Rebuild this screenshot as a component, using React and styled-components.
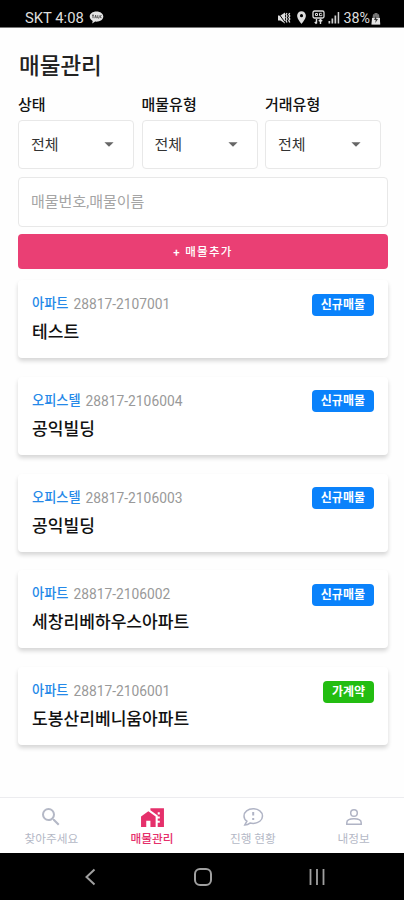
import React from "react";
import styled, {createGlobalStyle} from "styled-components";
import {MdArrowDropDown, MdHomeWork, MdLocationOn, MdSearch} from "react-icons/md";

const GlobalStyle = createGlobalStyle`
  * {
    box-sizing: border-box;
  }
  body {
    margin: 0;
    background: #fff;
    font-family: Roboto, "Noto Sans CJK KR", sans-serif;
  }
`;

const Screen = styled.div`
  width: 100%;
  height: 900px;
  display: flex;
  flex-direction: column;
  background: #fefefe;
  overflow: hidden;
`;

const StatusBar = styled.header`
  height: 28px;
  padding: 7px 23px 0 25px;
  display: flex;
  justify-content: space-between;
  background: #000;
  border-bottom: 1px solid #777;
  color: #dedede;
  font-size: 14px;
  line-height: 21px;
`;

const StatusGroup = styled.div`
  height: 21px;
  display: flex;
  align-items: center;
  gap: ${({gap}) => gap}px;
`;

const Carrier = styled.span`
  font-size: 14.8px;
  padding-top: 1px;
`;

const Battery = styled.div`
  display: flex;
  align-items: center;
  gap: 1px;
  padding-top: 1px;
  font-size: 14.3px;
`;

const Main = styled.main`
  flex: 1;
  padding: 21px 16px 0 18px;
`;

const Title = styled.h1`
  margin: 0;
  padding-left: 1px;
  font-size: 22.5px;
  font-weight: 500;
  line-height: 34px;
  color: #222;
`;

const Filters = styled.div`
  margin-top: 12px;
  display: grid;
  grid-template-columns: repeat(3, 116px);
  column-gap: 7.5px;
`;

const Label = styled.div`
  height: 25px;
  font-size: 15px;
  font-weight: 500;
  line-height: 20px;
  color: #111;
`;

const Select = styled.button`
  width: 116px;
  height: 49px;
  padding: 0 13px 2px 12px;
  display: flex;
  align-items: center;
  justify-content: space-between;
  border: 1px solid #e8e8e8;
  border-radius: 4px;
  background: #fff;
  font-family: inherit;
  font-size: 15px;
  color: #333;

  svg {
    color: #666;
  }
`;

const SearchInput = styled.input`
  display: block;
  width: 370px;
  height: 50px;
  margin-top: 8px;
  padding: 0 12px;
  border: 1px solid #e8e8e8;
  border-radius: 4px;
  background: #fff;
  font-family: inherit;
  font-size: 15px;

  &::placeholder {
    color: #a5a5a5;
    opacity: 1;
  }
`;

const AddButton = styled.button`
  display: block;
  width: 370px;
  height: 35px;
  margin-top: 7px;
  padding: 0 0 2px;
  border: 0;
  border-radius: 4px;
  background: #ea3f74;
  color: #fff;
  font-family: inherit;
  font-size: 11.5px;
  font-weight: 500;
  letter-spacing: 1.3px;
`;

const List = styled.div`
  width: 370px;
  margin-top: 11px;
  display: flex;
  flex-direction: column;
  gap: 18.75px;
`;

const Card = styled.article`
  height: 78px;
  padding: 14px 14px 0;
  display: flex;
  justify-content: space-between;
  align-items: flex-start;
  border-radius: 4px;
  background: #fff;
  box-shadow: 0 3px 4px rgba(0, 0, 0, 0.16);
`;

const Meta = styled.div`
  display: flex;
  gap: 5px;
  font-size: 13.8px;
  line-height: 20px;
  color: #999;
`;

const Kind = styled.span`
  color: #2589e8;
  font-size: 13.2px;
  font-weight: 500;
`;

const Name = styled.div`
  margin-top: 5px;
  font-size: 17.1px;
  font-weight: 500;
  line-height: 26px;
  color: #111;
`;

const Badge = styled.span`
  height: 22px;
  margin-top: -0.5px;
  padding: 0 9px;
  border-radius: 4px;
  background: ${({color}) => color};
  color: #fff;
  font-size: 12px;
  font-weight: 700;
  line-height: 22px;
`;

const TabBar = styled.nav`
  height: 56px;
  padding-left: 1px;
  display: grid;
  grid-template-columns: repeat(4, 1fr);
  border-top: 1px solid #ececef;
  background: #fff;
`;

const Tab = styled.div`
  padding-top: 7px;
  display: flex;
  flex-direction: column;
  align-items: center;
  gap: 1.5px;
  font-size: 11.7px;
  font-weight: ${({$active}) => ($active ? 500 : 400)};
  line-height: 17px;
  color: ${({$active}) => ($active ? "#e5306b" : "#b4b8c6")};
`;

const TabIcon = styled.span`
  height: 24px;
  display: flex;
  align-items: center;
`;

const SystemBar = styled.footer`
  height: 47px;
  padding: 0 78px 0 82px;
  display: flex;
  align-items: center;
  justify-content: space-between;
  background: #000;
`;

const TalkIcon = () => (
  <svg width="15" height="13" viewBox="0 0 15 13">
    <path d="M7.5 0.5C3.6 0.5 0.7 2.7 0.7 5.6c0 1.9 1.2 3.4 3 4.3L3.2 12.5l3-1.9c4.6.4 8.1-1.8 8.1-5C14.3 2.7 11.4.5 7.5.5z" fill="#e4e4e4"/>
    <path d="M3 4.2h2M4 4.2v3M5.8 7.2l.8-3 .8 3M8.8 4.2V7H10M11 4.2v3M12.4 4.2l-1.2 1.4 1.2 1.5" stroke="#444" strokeWidth="0.9" fill="none"/>
  </svg>
);

const MuteIcon = () => (
  <svg width="14" height="14" viewBox="0 0 14 14" fill="none" stroke="#dedede">
    <path d="M1 4.5h2.500L8 1.500v11L3.500 9.500H1z" fill="#dedede" stroke="none"/>
    <path d="M0.500 1l8 11" stroke="#000" strokeWidth="1"/>
    <path d="M10 2L9 3.500 10 5 9 6.500 10 8 9 9.500l1 2M12.800 2l-1 1.500 1 1.500-1 1.500 1 1.500-1 1.500 1 2" strokeWidth="1.3"/>
  </svg>
);

const NetworkIcon = () => (
  <svg width="13" height="15" viewBox="0 0 13 15" fill="none" stroke="#dedede">
    <rect x="1" y="1" width="11" height="7" rx="1.5" strokeWidth="1.3"/>
    <path d="M3.5 3.5v2h2v-2zM9.800 3.300H7.500v2.400h2.300V4.500" strokeWidth="1"/>
    <path d="M4.500 9v4.500M2.800 12l1.700 1.800M8.500 14V9.500M6.800 11.200l1.700-1.800 1.700 1.800" strokeWidth="1.4"/>
  </svg>
);

const SignalIcon = () => (
  <svg width="12" height="13" viewBox="0 0 12 13" fill="#cfcfcf">
    <path d="M0.500 10h1.700v2.500H.5zM3.500 7.500h1.700v5H3.500zM6.500 4.500h1.700v8H6.500zM9.700 1h1.500v11.500H9.700z"/>
  </svg>
);

const BatteryIcon = () => (
  <svg width="10" height="13" viewBox="0 0 10 13">
    <path d="M3.500 1h3v1.200H8l1.500 10.300h-9L2 2.200h1.500z" fill="#777"/>
    <path d="M1 6h8v6.500H.5z" fill="#e4e4e4"/>
    <path d="M5 4L3 8h1.700L4.300 11 7 7H5.300z" fill="#333"/>
  </svg>
);

const ProgressIcon = () => (
  <svg width="22" height="20" viewBox="0 0 22 20" fill="none" stroke="#b0b4c5" strokeWidth="1.5">
    <path d="M11.200 1.800C5.900 1.800 2 4.900 2 9c0 2.200 1.100 4 2.900 5.200L2.800 18c2.500-.1 4-.9 5.200-1.900 1 .2 2.100.3 3.200.3 5.300 0 9.300-3.200 9.300-7.400s-4-7.200-9.300-7.200z"/>
    <path d="M11.200 5v3.500M11.200 11v2" strokeWidth="2"/>
  </svg>
);

const PersonIcon = () => (
  <svg width="18" height="18" viewBox="0 0 18 18" fill="none" stroke="#b0b4c5" strokeWidth="1.5">
    <circle cx="9" cy="5" r="3.3"/>
    <path d="M1.800 16.300v-1.600C1.800 12 5 10.800 9 10.800s7.200 1.200 7.200 3.900v1.600z"/>
  </svg>
);

const items = [
  {kind: "아파트", no: "28817-2107001", name: "테스트", status: "신규매물"},
  {kind: "오피스텔", no: "28817-2106004", name: "공익빌딩", status: "신규매물"},
  {kind: "오피스텔", no: "28817-2106003", name: "공익빌딩", status: "신규매물"},
  {kind: "아파트", no: "28817-2106002", name: "세창리베하우스아파트", status: "신규매물"},
  {kind: "아파트", no: "28817-2106001", name: "도봉산리베니움아파트", status: "가계약"},
];

const statusColor = {
  "신규매물": "#0a82fb",
  "가계약": "#23bd11",
};

const tabs = [
  {label: "찾아주세요", icon: <MdSearch size={24}/>},
  {label: "매물관리", icon: <MdHomeWork size={25}/>, active: true},
  {label: "진행 현황", icon: <ProgressIcon/>},
  {label: "내정보", icon: <PersonIcon/>},
];

const App = () => {
  return (
    <>
      <GlobalStyle/>
      <Screen>
        <StatusBar>
          <StatusGroup gap={5}>
            <Carrier>SKT 4:08</Carrier>
            <TalkIcon/>
          </StatusGroup>
          <StatusGroup gap={3}>
            <MuteIcon/>
            <MdLocationOn size={15}/>
            <NetworkIcon/>
            <SignalIcon/>
            <Battery>
              38%
              <BatteryIcon/>
            </Battery>
          </StatusGroup>
        </StatusBar>
        <Main>
          <Title>매물관리</Title>
          <Filters>
            {["상태", "매물유형", "거래유형"].map((label) => (
              <div key={label}>
                <Label>{label}</Label>
                <Select>
                  전체
                  <MdArrowDropDown size={22}/>
                </Select>
              </div>
            ))}
          </Filters>
          <SearchInput placeholder="매물번호,매물이름"/>
          <AddButton>+ 매물추가</AddButton>
          <List>
            {items.map((item) => (
              <Card key={item.no}>
                <div>
                  <Meta>
                    <Kind>{item.kind}</Kind>
                    {item.no}
                  </Meta>
                  <Name>{item.name}</Name>
                </div>
                <Badge color={statusColor[item.status]}>{item.status}</Badge>
              </Card>
            ))}
          </List>
        </Main>
        <TabBar>
          {tabs.map((tab) => (
            <Tab key={tab.label} $active={tab.active}>
              <TabIcon>{tab.icon}</TabIcon>
              {tab.label}
            </Tab>
          ))}
        </TabBar>
        <SystemBar>
          <svg width="16" height="18" viewBox="0 0 16 18" fill="none" stroke="#a0a0a0" strokeWidth="2">
            <path d="M12.500 1.500L4.500 9l8 7.500"/>
          </svg>
          <svg width="20" height="20" viewBox="0 0 20 20" fill="none" stroke="#a0a0a0" strokeWidth="2">
            <rect x="2" y="2" width="16" height="16" rx="5"/>
          </svg>
          <svg width="18" height="18" viewBox="0 0 18 18" fill="none" stroke="#a0a0a0" strokeWidth="1.8">
            <path d="M2.500 1v16M9 1v16M15.500 1v16"/>
          </svg>
        </SystemBar>
      </Screen>
    </>
  );
};

export default App;
